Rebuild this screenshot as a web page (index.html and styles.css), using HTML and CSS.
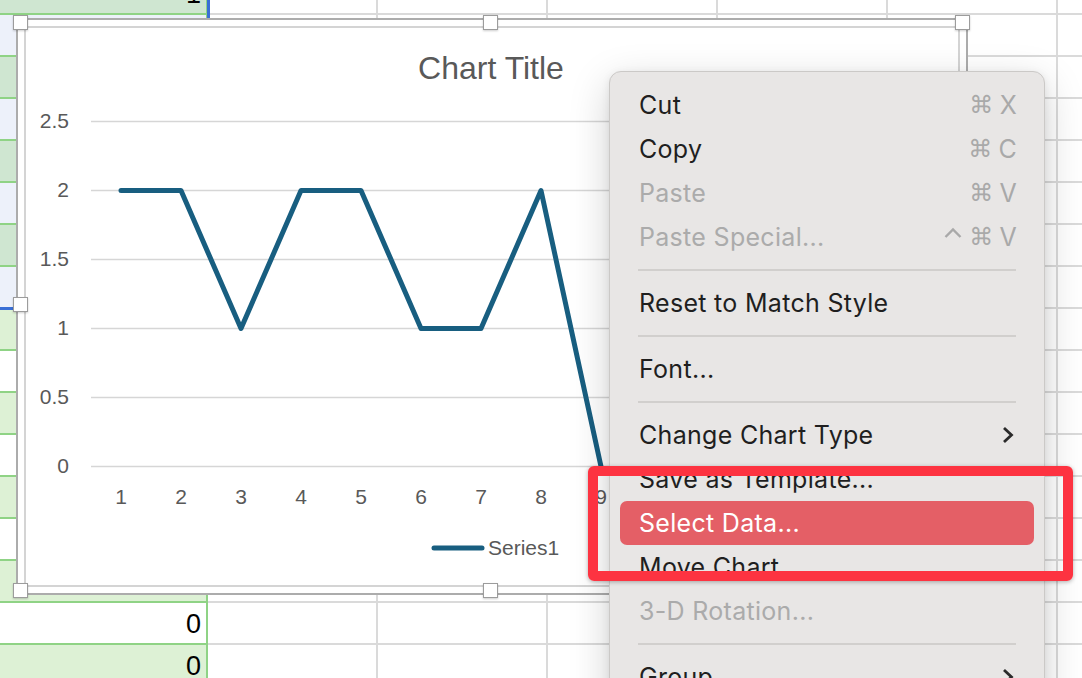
FILE: index.html
```html
<!doctype html>
<html>

<head>
  <meta charset="utf-8">
  <title>Chart - Select Data</title>

  <link rel="stylesheet" href="styles.css">
</head>

<body>

  <div class="sheet">
    <div class="col-a">
      <div class="cell sel green">1</div>
      <div class="cell sel"></div>
      <div class="cell sel green"></div>
      <div class="cell sel"></div>
      <div class="cell sel green"></div>
      <div class="cell sel"></div>
      <div class="cell sel green"></div>
      <div class="cell sel"></div>
      <div class="cell green"></div>
      <div class="cell"></div>
      <div class="cell green"></div>
      <div class="cell"></div>
      <div class="cell green"></div>
      <div class="cell"></div>
      <div class="cell green"></div>
      <div class="cell">0</div>
      <div class="cell green">0</div>
    </div>
    <div class="cols"></div>
  </div>

  <div class="selection"></div>

  <!-- chart object, selected -->
  <div class="chart">
    <div class="chart-area">
      <svg class="plot" viewBox="26 28 932 557" width="932" height="557" xmlns="http://www.w3.org/2000/svg">
        <text class="title" x="491" y="79">Chart Title</text>

        <g class="gridlines">
          <line x1="91" x2="931" y1="121.5" y2="121.5" />
          <line x1="91" x2="931" y1="190.5" y2="190.5" />
          <line x1="91" x2="931" y1="259.5" y2="259.5" />
          <line x1="91" x2="931" y1="328.5" y2="328.5" />
          <line x1="91" x2="931" y1="397.5" y2="397.5" />
          <line x1="91" x2="931" y1="466.5" y2="466.5" />
        </g>

        <g class="axis-y">
          <text x="69" y="128">2.5</text>
          <text x="69" y="197">2</text>
          <text x="69" y="266">1.5</text>
          <text x="69" y="335">1</text>
          <text x="69" y="404">0.5</text>
          <text x="69" y="473">0</text>
        </g>

        <g class="axis-x">
          <text x="121" y="504">1</text>
          <text x="181" y="504">2</text>
          <text x="241" y="504">3</text>
          <text x="301" y="504">4</text>
          <text x="361" y="504">5</text>
          <text x="421" y="504">6</text>
          <text x="481" y="504">7</text>
          <text x="541" y="504">8</text>
          <text x="601" y="504">9</text>
        </g>

        <polyline class="series"
          points="121,190.5 181,190.5 241,328.5 301,190.5 361,190.5 421,328.5 481,328.5 541,190.5 601,466.5" />

        <line class="legend-key" x1="434" x2="482" y1="548" y2="548" />
        <text class="legend-text" x="488" y="555">Series1</text>
      </svg>
    </div>

    <span class="handle h-tl"></span>
    <span class="handle h-tm"></span>
    <span class="handle h-tr"></span>
    <span class="handle h-ml"></span>
    <span class="handle h-mr"></span>
    <span class="handle h-bl"></span>
    <span class="handle h-bm"></span>
    <span class="handle h-br"></span>
  </div>

  <!-- context menu -->
  <div class="menu">
    <div class="item"><span>Cut</span><span class="keys"><span class="cmd">⌘</span>X</span></div>
    <div class="item"><span>Copy</span><span class="keys"><span class="cmd">⌘</span>C</span></div>
    <div class="item off"><span>Paste</span><span class="keys"><span class="cmd">⌘</span>V</span></div>
    <div class="item off"><span>Paste Special...</span>
      <span class="keys">
        <svg class="ctrl" width="18" height="20" viewBox="0 0 18 20"><polyline points="1.5,10 9,2.5 16.5,10" /></svg>
        <span class="cmd">⌘</span>V
      </span>
    </div>
    <div class="sep"></div>
    <div class="item"><span>Reset to Match Style</span></div>
    <div class="sep"></div>
    <div class="item"><span>Font...</span></div>
    <div class="sep"></div>
    <div class="item"><span>Change Chart Type</span>
      <svg class="sub" width="12" height="18" viewBox="0 0 12 18"><polyline points="2,2 9.5,9 2,16" /></svg>
    </div>
    <div class="item"><span>Save as Template...</span></div>
    <div class="item active"><span>Select Data...</span></div>
    <div class="item"><span>Move Chart</span></div>
    <div class="item off"><span>3-D Rotation...</span></div>
    <div class="sep"></div>
    <div class="item"><span>Group</span>
      <svg class="sub" width="12" height="18" viewBox="0 0 12 18"><polyline points="2,2 9.5,9 2,16" /></svg>
    </div>
  </div>

  <div class="callout"></div>

</body>

</html>
```

FILE: styles.css
```css
* {
  box-sizing: border-box;
}

body {
  margin: 0;
  width: 1082px;
  height: 678px;
  overflow: hidden;
  position: relative;
  background: #fff;
  font-family: "Liberation Sans", Arial, sans-serif;
}

/* spreadsheet grid */

.sheet {
  display: flex;
  margin-top: -27px;
  height: 714px;
}

.col-a {
  width: 208px;
  flex: none;
}

.cell {
  height: 42px;
  border-right: 2px solid #8fd385;
  border-bottom: 2px solid #8fd385;
  padding-right: 5px;
  text-align: right;
  font-size: 27px;
  line-height: 43px;
  color: #000;
}

.cell.green {
  background: #ddf1d5;
}

.cell.sel {
  background: #edf1fa;
}

.cell.sel.green {
  background: #cfe6d1;
}

.cols {
  flex: 1;
  background-image:
    repeating-linear-gradient(to right, transparent 0 168px, #dadada 168px 170px),
    repeating-linear-gradient(to bottom, transparent 0 40px, #dadada 40px 42px);
}

.selection {
  position: absolute;
  left: -10px;
  top: -10px;
  width: 220px;
  height: 320px;
  border: 3px solid #3a6fd5;
}

/* chart */

.chart {
  position: absolute;
  left: 16px;
  top: 18px;
  width: 952px;
  height: 577px;
  padding: 6px;
  border: 2px solid #acacac;
  background: #fff;
}

.chart-area {
  height: 100%;
  border: 2px solid #d4d4d4;
}

.plot {
  display: block;
  font-family: "Liberation Sans", Arial, sans-serif;
}

.plot text {
  fill: #595959;
  font-size: 21px;
}

.plot .title {
  font-size: 32px;
  text-anchor: middle;
}

.gridlines line {
  stroke: #d6d6d6;
  stroke-width: 1.5;
}

.axis-y text {
  text-anchor: end;
}

.axis-x text {
  text-anchor: middle;
}

.series {
  fill: none;
  stroke: #185e80;
  stroke-width: 5;
  stroke-linejoin: round;
  stroke-linecap: round;
}

.legend-key {
  stroke: #185e80;
  stroke-width: 5;
  stroke-linecap: round;
}

.handle {
  position: absolute;
  width: 15px;
  height: 15px;
  background: #fff;
  border: 1px solid #9c9c9c;
  box-shadow: 0 1px 2px rgba(0, 0, 0, 0.2);
}

.h-tl { left: -5px;  top: -5px; }
.h-tm { left: 465px; top: -5px; }
.h-tr { left: 937px; top: -5px; }
.h-ml { left: -5px;  top: 277px; }
.h-mr { left: 937px; top: 277px; }
.h-bl { left: -5px;  top: 563px; }
.h-bm { left: 465px; top: 563px; }
.h-br { left: 937px; top: 563px; }

/* context menu */

.menu {
  position: absolute;
  left: 609px;
  top: 71px;
  width: 436px;
  padding: 11px 0 20px;
  background: #e8e6e5;
  border: 1px solid #cbc9c7;
  border-radius: 12px;
  box-shadow: 0 12px 40px rgba(0, 0, 0, 0.18), 0 2px 8px rgba(0, 0, 0, 0.08);
  font-family: Inter, "Liberation Sans", sans-serif;
  font-size: 25px;
  letter-spacing: 0.3px;
  color: #1f1f1f;
}

.item {
  height: 44px;
  display: flex;
  align-items: center;
  justify-content: space-between;
  padding: 0 27px 0 29px;
}

.item.off {
  color: #ababab;
}

.item.active {
  margin: 0 10px;
  padding-left: 19px;
  border-radius: 7px;
  background: #e45f66;
  color: #fff;
}

.keys {
  display: flex;
  align-items: center;
  gap: 6px;
  color: #a9a9a9;
}

.cmd {
  font-family: "DejaVu Sans", sans-serif;
  font-size: 24px;
  line-height: 30px;
}

.ctrl {
  margin-right: 1px;
}

.ctrl polyline {
  fill: none;
  stroke: #a9a9a9;
  stroke-width: 2.4;
}

.sub {
  margin-right: 3px;
}

.sub polyline {
  fill: none;
  stroke: #2a2a2a;
  stroke-width: 2.8;
}

.sep {
  height: 22px;
  display: flex;
  align-items: center;
  padding: 0 28px;
}

.sep::before {
  content: "";
  flex: 1;
  height: 2px;
  background: #d1cfcd;
}

/* annotation */

.callout {
  position: absolute;
  left: 588px;
  top: 466px;
  width: 485px;
  height: 115px;
  border: 10px solid #fd3341;
  border-radius: 6px;
  box-shadow: 0 1px 4px rgba(0, 0, 0, 0.3);
}
```
